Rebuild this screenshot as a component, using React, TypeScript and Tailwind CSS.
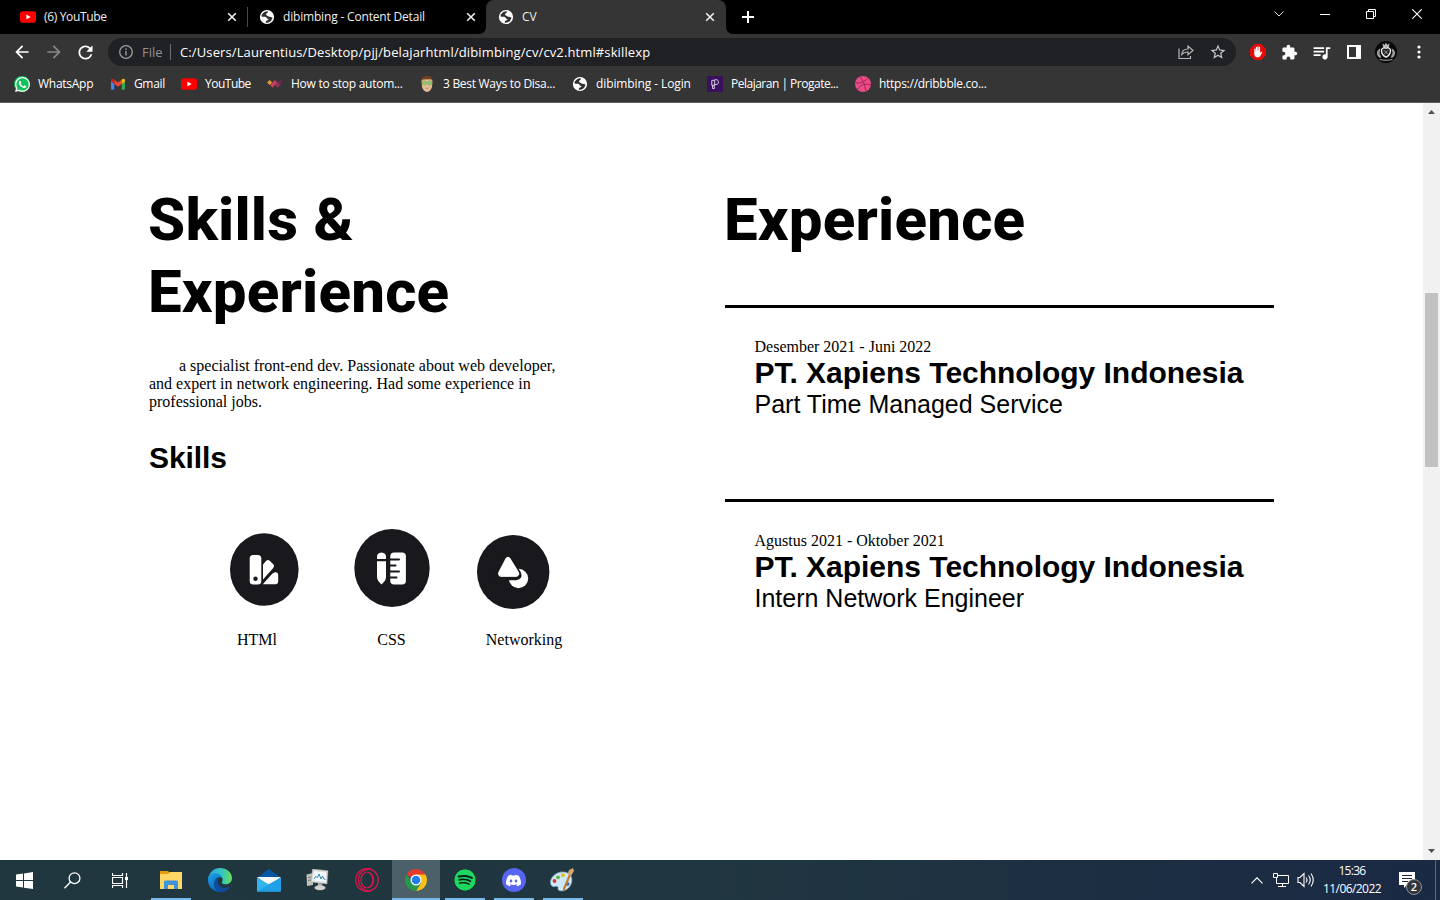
import React from "react";
import { SiDiscord } from "react-icons/si";
import { MdExtension, MdQueueMusic, MdRefresh, MdArrowBack, MdArrowForward, MdStarOutline } from "react-icons/md";
import { FaSpotify, FaWhatsapp } from "react-icons/fa";

const UI = "font-['Open_Sans','Noto_Sans',sans-serif]";

function YouTube() {
  return (
    <svg width="16" height="16" viewBox="0 0 16 16" className="block">
      <rect x="0" y="2.3" width="16" height="11.4" rx="2.8" fill="#f00" />
      <path d="M6.4 5.6 10.6 8l-4.2 2.4z" fill="#fff" />
    </svg>
  );
}

function Globe() {
  return (
    <svg width="16" height="16" viewBox="0 0 16 16" className="block">
      <circle cx="8" cy="8" r="7.1" fill="#fff" />
      <path d="M8.800 2.300C6.500 2.200 4.200 3.400 2.900 5.600c-.3.800-.4 1.400-.4 2 1.300.2 3-.2 4.300.3 1.200.4.700 1.600 1.700 1.800.9.200 1.300.6.700 1.400-.6.700-1.900.4-2.300 1.300-.2.500-.1.900-.1 1.300 2.500.2 4.600-.8 5.800-2.800.5-.9.800-1.800.8-2.700-1.200.5-1.800-.6-2.600-.5-1 .1-1.500 0-1.900-.7-.3-.6-1.600-.4-1.800-1.300-.2-.8.400-1.400 1.200-1.700.6-.2.500-1 .5-1.700z" fill="#303030" />
    </svg>
  );
}

function Gmail() {
  return (
    <svg width="16" height="16" viewBox="0 0 16 16" className="block">
      <path d="M1 4.500 4.300 7v6.800H2a1 1 0 0 1-1-1z" fill="#4285f4" />
      <path d="M11.700 7 15 4.500v8.300a1 1 0 0 1-1 1h-2.300z" fill="#34a853" />
      <path d="m4.300 3.700 3.700 2.800 3.700-2.800V8L8 10.800 4.300 8z" fill="#ea4335" />
      <path d="M1 4.500c0-1.900 1.800-2.200 3.300-.8V8L1 5.600z" fill="#c5221f" />
      <path d="M15 4.500c0-1.900-1.800-2.200-3.300-.8V8L15 5.600z" fill="#fbbc04" />
    </svg>
  );
}

function WhatsApp() {
  return (
    <span className="flex size-4 items-center justify-center rounded-full bg-[#12c25b] text-white">
      <FaWhatsapp size={17} className="shrink-0" />
    </span>
  );
}

function Diamonds() {
  return (
    <svg width="16" height="16" viewBox="0 0 16 16" className="block">
      <path d="m2.700 4 2.600 2.500-2.600 2.600L.1 6.500z" fill="#d99a29" />
      <path d="m5.500 6.500 2.600 2.600-2.600 2.700L3 9.100zM8 4l2.500 2.500L8 9.100 5.400 6.500z" fill="#c43f58" />
      <path d="m10.700 6.500 2.500 2.600-2.500 2.700L8 9.100z" fill="#96306b" />
      <path d="m10.600 6.400 2.600-2.500 2.500.6-2.600 2.300 2.100.4-2 2z" fill="#6a2855" />
    </svg>
  );
}

function Face() {
  return (
    <svg width="16" height="16" viewBox="0 0 16 16" className="block">
      <path d="M2.500 5c0-2.500 2-4 5.500-4s5.500 1.500 5.500 4.500L13 11q-1.500 4.500-5 5-3.500-.5-5-5z" fill="#e4bd95" />
      <path d="M2.800 5C2 1.500 4.500 0 8 0s6 1.500 5.200 5L12 3.300 4 3.600z" fill="#70401f" />
      <circle cx="5.400" cy="7" r="2.100" fill="#95c96f" stroke="#6da252" strokeWidth=".6" />
      <circle cx="10.600" cy="7" r="2.100" fill="#95c96f" stroke="#6da252" strokeWidth=".6" />
      <path d="M6.500 12.300h3" stroke="#b98063" strokeWidth=".8" />
    </svg>
  );
}

function Progate() {
  return (
    <svg width="16" height="16" viewBox="0 0 16 16" className="block">
      <rect width="16" height="16" rx="1" fill="#38105d" />
      <path d="M4.800 4.300h2.900v5H4.800zM5.600 9.300v3.200h1.700V9.500M7.700 3.700h1.600c2.900 0 2.900 4.800-.1 4.800H7.700" fill="none" stroke="#ddcfea" strokeWidth="1" />
    </svg>
  );
}

function Dribbble() {
  return (
    <svg width="16" height="16" viewBox="0 0 16 16" className="block">
      <circle cx="8" cy="8" r="8" fill="#ea4c89" />
      <path d="M5 .8c3 3.300 4.800 8 5.800 14M.5 7c5 .2 9-1 12.200-4.500M2.500 13.400C5.500 8.500 10.500 7 15.800 9" fill="none" stroke="#a42458" strokeWidth="1" />
    </svg>
  );
}

function Close() {
  return (
    <svg width="10" height="10" viewBox="0 0 10 10" className="block">
      <path d="m1.200 1.200 7.600 7.600m0-7.600L1.200 8.800" stroke="#f1f1f1" strokeWidth="1.600" />
    </svg>
  );
}

function Tabs() {
  return (
    <div className="flex h-[34px] shrink-0 bg-black text-[12px] text-[#eeeeee]">
      <div className="flex w-[247px] items-center pl-5">
        <YouTube />
        <span className="ml-2 w-[183px] tracking-[-0.34px]">(6) YouTube</span>
        <Close />
      </div>
      <div className="flex w-[239px] items-center">
        <span className="h-5 w-px bg-[#4a4a4a]" />
        <span className="ml-[11px]"><Globe /></span>
        <span className="ml-2 w-[183px] whitespace-nowrap tracking-[-0.18px]">dibimbing - Content Detail</span>
        <Close />
      </div>
      <div className="relative flex w-60 items-center rounded-t-lg bg-[#353535] pl-3">
        <svg width="8" height="8" className="absolute bottom-0 -left-2"><path d="M8 0v8H0q8 0 8-8" fill="#353535" /></svg>
        <svg width="8" height="8" className="absolute -right-2 bottom-0"><path d="M0 0v8h8Q0 8 0 0" fill="#353535" /></svg>
        <Globe />
        <span className="ml-2 w-[183px] tracking-[-0.1px]">CV</span>
        <Close />
      </div>
      <svg width="12" height="12" viewBox="0 0 12 12" className="mt-[11px] ml-4"><path d="M6 0v12M0 6h12" stroke="#fff" strokeWidth="2" /></svg>
      <div className="ml-auto flex h-7 items-center text-white">
        <svg width="10" height="6" viewBox="0 0 10 6" className="mr-9"><path d="m.5.5 4.500 4.500L9.500.5" fill="none" stroke="#ddd" /></svg>
        <svg width="10" height="10" className="mr-9"><path d="M0 5.500h10" stroke="#fff" /></svg>
        <svg width="10" height="10" className="mr-9"><path d="M.5 2.500h7v7h-7zM2.500 2.500v-2h7v7h-2" fill="none" stroke="#fff" /></svg>
        <svg width="10" height="10" className="mr-[18px]"><path d="m.3.3 9.400 9.400m0-9.400L.3 9.700" stroke="#fff" strokeWidth="1.100" /></svg>
      </div>
    </div>
  );
}

function Crest() {
  return (
    <svg width="22" height="22" viewBox="0 0 22 22" className="block">
      <circle cx="11" cy="11" r="11" fill="#080808" />
      <path d="m7.500 2.300 2 1.700L11 1.700 12.500 4l2-1.700-.7 4H8.200z" fill="#bbb" />
      <path d="M5.500 7.500c-4 1-5 6-1.500 9l2.500.2L4.500 12zm11 0c4 1 5 6 1.500 9l-2.500.2 2-4.700z" fill="#999" />
      <path d="M11 7.300c-2.200-1.400-5 .2-4.500 3 .3 2.500 2.200 4.700 4.500 6 2.300-1.300 4.200-3.500 4.500-6 .5-2.800-2.300-4.400-4.500-3z" fill="#222" stroke="#f0f0f0" strokeWidth="1.300" />
      <path d="m9 9.300 4 4m0-4-4 4" stroke="#999" />
      <path d="M4.500 18.500c4 1 9 1 13 0" fill="none" stroke="#bbb" strokeWidth=".9" />
    </svg>
  );
}

function Toolbar() {
  return (
    <div className="flex h-9 shrink-0 items-center bg-[#353535] text-white">
      <MdArrowBack size={20} className="ml-3" />
      <MdArrowForward size={20} className="ml-3 text-[#888]" />
      <MdRefresh size={21} className="ml-[11px]" />
      <div className="ml-3 flex h-7 w-[1128px] items-center rounded-full bg-[#202124]">
        <svg width="14" height="14" viewBox="0 0 14 14" className="ml-[11px]"><circle cx="7" cy="7" r="6.300" fill="none" stroke="#9aa0a6" strokeWidth="1.300" /><path d="M7 6v4.500M7 3.500V5" stroke="#9aa0a6" strokeWidth="1.400" /></svg>
        <span className="ml-[9px] w-[28px] pt-px text-[13px] text-[#8f9397]">File</span>
        <span className="h-4 w-px bg-[#6b6e72]" />
        <span className="ml-[9px] whitespace-nowrap pt-px text-[13px] tracking-[0.12px]">C:/Users/Laurentius/Desktop/pjj/belajarhtml/dibimbing/cv/cv2.html#skillexp</span>
        <svg width="16" height="16" viewBox="0 0 16 16" className="mr-[15px] ml-auto"><path d="M1 4.500v10h11.500V12M3.800 10.500C4 7 6 5 10 5V2l5 4.500-5 4.200V8C7 8 5.300 8.600 3.800 10.500z" fill="none" stroke="#b4b6b8" strokeWidth="1.200" /></svg>
        <MdStarOutline size={18} className="mr-[9px] text-[#c5c7ca]" />
      </div>
      <svg width="16" height="16" viewBox="0 0 16 16" className="ml-[14px]">
        <path d="M4.700 0h6.600L16 4.700v6.600L11.300 16H4.700L0 11.300V4.700z" fill="#e30b0b" />
        <path d="M4.300 8V5.200c0-.9 1.200-.9 1.200 0V7h.3V3.500c0-1 1.200-1 1.200 0v3h.3V2.900c0-1 1.300-1 1.300 0v3.600h.3v-3c0-1 1.200-1 1.200 0V9l1-.9c.5-.6 1.400-.1 1 .6l-2 3.500C9 14 4.300 14 4.300 10z" fill="#fff" />
      </svg>
      <MdExtension size={17} className="ml-[15px]" />
      <MdQueueMusic size={21} className="ml-[13px]" />
      <svg width="14" height="14" className="ml-[15px]"><path d="M1 1h12v12H1z" fill="none" stroke="#fff" strokeWidth="2" /><path d="M9 1h4v12H9z" fill="#fff" /></svg>
      <span className="ml-[14px]"><Crest /></span>
      <svg width="4" height="14" className="ml-5"><g fill="#fff"><circle cx="2" cy="2" r="1.600" /><circle cx="2" cy="7" r="1.600" /><circle cx="2" cy="12" r="1.600" /></g></svg>
    </div>
  );
}

const bookmarks = [
  { icon: <WhatsApp />, label: "WhatsApp", box: "w-[96px]", track: "tracking-[-0.27px]" },
  { icon: <Gmail />, label: "Gmail", box: "w-[71px]", track: "tracking-[-0.35px]" },
  { icon: <YouTube />, label: "YouTube", box: "w-[86px]", track: "tracking-[-0.5px]" },
  { icon: <Diamonds />, label: "How to stop autom...", box: "w-[152px]", track: "tracking-[-0.26px]" },
  { icon: <Face />, label: "3 Best Ways to Disa...", box: "w-[153px]", track: "tracking-[-0.29px]" },
  { icon: <Globe />, label: "dibimbing - Login", box: "w-[135px]", track: "tracking-[-0.1px]" },
  { icon: <Progate />, label: "Pelajaran | Progate...", box: "w-[148px]", track: "tracking-[-0.5px]" },
  { icon: <Dribbble />, label: "https://dribbble.co...", box: "w-[150px]", track: "tracking-[-0.27px]" },
];

function Bookmarks() {
  return (
    <div className="flex h-[33px] shrink-0 items-start border-b border-[#5c5c5c] bg-[#353535] pt-[5px] pl-[14px] text-[12px] text-white">
      {bookmarks.map((b) => (
        <div key={b.label} className={`flex h-[18px] shrink-0 items-center gap-2 ${b.box}`}>
          {b.icon}
          <span className={`whitespace-nowrap ${b.track}`}>{b.label}</span>
        </div>
      ))}
    </div>
  );
}

function Job({ date, role }: { date: string; role: string }) {
  return (
    <div className="h-[194px] border-t-[3px] border-black pt-[30px] pl-[29.500px]">
      <p className="h-[18px] font-['Liberation_Serif',serif] text-[16px] leading-[18px]">{date}</p>
      <h3 className="h-[34px] whitespace-nowrap font-['Liberation_Sans',sans-serif] text-[30px] leading-[34px] font-bold tracking-[-0.02px]">PT. Xapiens Technology Indonesia</h3>
      <p className="font-['Liberation_Sans',sans-serif] text-[25px] leading-[29px]">{role}</p>
    </div>
  );
}

function Page() {
  return (
    <main className="flex min-w-0 flex-1 bg-white text-black">
      <section className="ml-[149px] w-[576px]">
        <h1 className="mt-[81px] -ml-px w-[350px] font-['Roboto',sans-serif] text-[60px] leading-[72px] font-extrabold tracking-[0.2px]">Skills &amp; Experience</h1>
        <p className="mt-[29px] w-[420px] indent-[30px] font-['Liberation_Serif',serif] text-[16px] leading-[18px]">
          a specialist front-end dev. Passionate about web developer,<br />and expert in network engineering. Had some experience in<br />professional jobs.
        </p>
        <h2 className="mt-[30px] font-['Liberation_Sans',sans-serif] text-[30px] leading-[34px] font-bold tracking-[-0.1px]">Skills</h2>
        <div className="mt-[54px] ml-[81px] flex h-20">
          <svg width="69" height="73" viewBox="0 0 69 73" className="mt-1">
            <ellipse cx="34.300" cy="36.500" rx="34.300" ry="36.300" fill="#19181d" />
            <g fill="#fff"><rect x="19.700" y="22" width="11.600" height="29.500" rx="3.500" /><path d="M33 31.500 36 28q2-2 4 .1l3 3q2 2 0 4.200L33 46.500zM32.800 51.300 42 41q2-2 4-1.700 2.200.3 2.200 2.700v6q0 3.300-3 3.300z" /></g>
            <circle cx="25.500" cy="45.700" r="2.200" fill="#19181d" />
          </svg>
          <svg width="76" height="79" viewBox="0 0 76 79" className="ml-[55px]">
            <ellipse cx="38" cy="39" rx="37.700" ry="39" fill="#19181d" />
            <path d="M23 30v-2.500q0-3.500 4.500-4 4.500.5 4.500 4V30zm0 2.200h9V48q0 3.500-4.500 7.500Q23 51.500 23 48z" fill="#fff" />
            <rect x="36.300" y="23.500" width="15.600" height="32" rx="3.800" fill="#fff" />
            <path d="M36 30.500h9M36 36.500h5.500M36 42.500h9M36 48.500h6.500" stroke="#19181d" strokeWidth="2" strokeLinecap="round" />
          </svg>
          <svg width="73" height="75" viewBox="0 0 73 75" className="mt-[6px] ml-[47px]">
            <ellipse cx="36.200" cy="37" rx="36.200" ry="37" fill="#19181d" />
            <circle cx="41.500" cy="43.500" r="9.700" fill="#fff" />
            <path d="M28.500 23.500q2.300-3.500 5 0l8.500 14q2.500 5.500-3 6H24q-5.500-.5-3-6z" fill="#fff" stroke="#19181d" strokeWidth="3.500" />
            <path d="M28.500 23.500q2.300-3.500 5 0l8 13q2.300 4.300-2 5H24q-4.300-.7-2.300-5z" fill="#fff" />
          </svg>
        </div>
        <div className="mt-[22px] flex font-['Liberation_Serif',serif] text-[16px] leading-[18px]">
          <span className="ml-[88px] w-[140.300px]">HTMl</span><span className="w-[108.500px]">CSS</span><span>Networking</span>
        </div>
      </section>
      <section className="w-[549px]">
        <h1 className="mt-[81px] mb-[49px] -ml-px font-['Roboto',sans-serif] text-[60px] leading-[72px] font-extrabold tracking-[0.2px]">Experience</h1>
        <Job date="Desember 2021 - Juni 2022" role="Part Time Managed Service" />
        <Job date="Agustus 2021 - Oktober 2021" role="Intern Network Engineer" />
      </section>
    </main>
  );
}

function Scrollbar() {
  return (
    <div className="flex w-[17px] shrink-0 flex-col items-center justify-between bg-[#f1f1f1]">
      <svg width="17" height="17"><path d="m5 11 3.500-4 3.500 4z" fill="#505050" /></svg>
      <div className="mt-[173px] mb-auto h-[174px] w-[13px] bg-[#c1c1c1]" />
      <svg width="17" height="17"><path d="m5 6 3.500 4L12 6z" fill="#505050" /></svg>
    </div>
  );
}

function Windows() {
  return <svg width="17" height="17" viewBox="0 0 17 17"><path d="m0 2.500 7-.9V8H0zM8 1.400 17 0v8H8zM0 9h7v6.500l-7-1zM8 9h9v8l-9-1.300z" fill="#fff" /></svg>;
}
function Search() {
  return <svg width="17" height="17" viewBox="0 0 17 17"><circle cx="10.500" cy="6.200" r="5.400" fill="none" stroke="#fff" strokeWidth="1.300" /><path d="m6.500 10-6 6.300" stroke="#fff" strokeWidth="1.300" /></svg>;
}
function TaskView() {
  return <svg width="17" height="17" viewBox="0 0 17 17"><path d="M.5 1v2.500h10V1M.5 16v-2.500h10V16M.5 5.500h10v6H.5zM14.500 1v15" fill="none" stroke="#fff" strokeWidth="1.200" /><path d="M13 5h3v3h-3z" fill="#fff" /></svg>;
}
function Folder() {
  return <svg width="22" height="19" viewBox="0 0 22 19"><path d="M0 0h8l2 2v5H0z" fill="#e69b0b" /><path d="M0 3h8l2-2h12v17H0z" fill="#ffd766" /><path d="M4 18v-7q0-1.500 1.500-1.500h11q1.500 0 1.500 1.500v7h-4v-4H8v4z" fill="#3d92d8" /></svg>;
}
function Edge() {
  return (
    <svg width="24" height="24" viewBox="0 0 24 24">
      <defs>
        <linearGradient id="edgeTop" x1="0" x2="1"><stop stopColor="#2aa7e4" /><stop offset=".6" stopColor="#36c6bd" /><stop offset="1" stopColor="#6adf52" /></linearGradient>
        <linearGradient id="edgeBody" x1="0" x2=".6" y2="1"><stop stopColor="#1ca0e8" /><stop offset="1" stopColor="#0761b8" /></linearGradient>
      </defs>
      <path d="M0 11.500C.7 4.800 5.700 0 12 0c6.800 0 12 4.600 12 10 0 4-3 6.300-6.500 6.300-2.800 0-4-1-3.500-2.300 1-2 1-4-1-5.500C8.800 5 2 7 0 11.500z" fill="url(#edgeTop)" />
      <path d="M0 12c0-5 4-6.700 7-6.700 3.700 0 6.700 2 7 4.700-3-2-6.500 0-6.500 4 0 5 5.500 8 12 6C17 23 14.800 24 12 24 5.300 24 0 18.700 0 12z" fill="url(#edgeBody)" />
      <path d="M9.500 9.500C3 13 6 23.500 13 24c4 .1 7.500-2.300 9.300-5.500C15 22 8 18 9.500 9.500z" fill="#104d9b" />
    </svg>
  );
}
function Mail() {
  return <svg width="24" height="23" viewBox="0 0 24 23"><path d="M0 9 12 0l12 9v4H0z" fill="#0757a9" /><path d="M0 8h24l-12 9z" fill="#f7f7f7" /><path d="M0 8.500 24 22.500H0z" fill="#31b5ef" /><path d="M24 8.500v14H0l13-8z" fill="#20a0e6" /></svg>;
}
function Monitor() {
  return (
    <svg width="23" height="22" viewBox="0 0 23 22">
      <path d="M.5 5.500 7 4v12l-6 1z" fill="#bfc1ba" />
      <path d="m6.500 0 15.500 1.800L21 15 5 13z" fill="#dededa" stroke="#a7a7a3" strokeWidth=".5" />
      <path d="m8 2.200 12.300 1.300-.8 9.500L6.700 11.500z" fill="#f3faff" />
      <path d="m8 10 1.500-2.500 2 1L13 5l2 5 1.500-3 1.500 3 1.500.5" fill="none" stroke="#3886b7" />
      <path d="m12 14 4 .5.500 4h-5z" fill="#a9aba7" />
      <ellipse cx="14" cy="18.800" rx="5.500" ry="2.500" fill="#d2d3cf" />
      <path d="M2 8.500 5 8M2 11.500l3-.5" stroke="#707b77" />
    </svg>
  );
}
function Opera() {
  return <svg width="24" height="24" viewBox="0 0 24 24"><g fill="none" stroke="#e3164b" strokeWidth="1.200"><circle cx="12" cy="12" r="11.300" /><ellipse cx="12" cy="12" rx="6" ry="8" /><path d="M15.500 1.300C9 .5 3.500 5.500 3.500 12S9 23.500 15.500 22.700M13.500 4.300c3 1 5 4 5 7.700s-2 6.700-5 7.700" /></g></svg>;
}
function Chrome() {
  return <svg width="22" height="22" viewBox="0 0 22 22"><path d="M11 11 1.500 5.500a11 11 0 0 1 19 0z" fill="#e33b2e" /><path d="M11 5.500h9.500A11 11 0 0 1 11 22l5-8z" fill="#fbc116" /><path d="M1.500 5.500A11 11 0 0 0 11 22l4.800-8.300L11 12l-4.700 1.600z" fill="#279847" /><circle cx="11" cy="11" r="5.500" fill="#fff" /><circle cx="11" cy="11" r="4.300" fill="#247ee9" /></svg>;
}
function Discord() {
  return <span className="flex size-6 items-center justify-center rounded-full bg-[#5865f2] text-white"><SiDiscord size={15} /></span>;
}
function Paint() {
  return (
    <svg width="25" height="24" viewBox="0 0 25 24">
      <path d="M14 4C7 3 0 9 .5 15c.3 3 2.500 4.200 5 3.500 2-.5 3 .5 2.500 2-.4 2 2.500 3 6 2 6-1.500 9-8 7.500-13C20.500 6 18 4.500 14 4z" fill="#cde8f6" stroke="#7ca9c5" strokeWidth=".7" />
      <circle cx="4.500" cy="13" r="1.900" fill="#d93a2f" /><circle cx="8" cy="9.300" r="1.900" fill="#5cb341" /><circle cx="13" cy="7.300" r="2" fill="#e1be27" /><circle cx="17.500" cy="16" r="2" fill="#3c74c1" />
      <path d="m19 6 2 1-6.500 15.500-1.500 1v-3z" fill="#c67a2b" /><path d="m18 5 1-3 4-2 1 3-3 5z" fill="#d8a46c" />
    </svg>
  );
}

const apps = [
  { icon: <Windows />, box: "w-12", line: "" },
  { icon: <Search />, box: "w-12", line: "" },
  { icon: <TaskView />, box: "w-12", line: "" },
  { icon: <Folder />, box: "ml-0.5 w-[49px]", line: "h-0.5 w-10 bg-[#76b9ed]" },
  { icon: <Edge />, box: "w-[49px]", line: "" },
  { icon: <Mail />, box: "w-[49px]", line: "" },
  { icon: <Monitor />, box: "w-[49px]", line: "" },
  { icon: <Opera />, box: "w-[50px]", line: "" },
  { icon: <Chrome />, box: "w-12 bg-[#4c6069]", line: "h-0.5 w-12 bg-[#76b9ed]" },
  { icon: <FaSpotify size={22} color="#1ed760" className="rounded-full bg-[#102019]" />, box: "w-[49px]", line: "h-0.5 w-10 bg-[#76b9ed]" },
  { icon: <Discord />, box: "w-[49px]", line: "h-0.5 w-10 bg-[#76b9ed]" },
  { icon: <Paint />, box: "w-[49px]", line: "h-0.5 w-10 bg-[#76b9ed]" },
];

function Taskbar() {
  return (
    <footer className="flex h-10 shrink-0 bg-linear-to-r from-[#21373f] via-[#203640] to-[#1a2944] text-white">
      {apps.map((a, i) => (
        <div key={i} className={`flex h-10 shrink-0 flex-col items-center ${a.box}`}>
          <div className="flex h-[38px] items-center justify-center pt-0.5">{a.icon}</div>
          <span className={a.line} />
        </div>
      ))}
      <div className="ml-auto flex items-center">
        <svg width="12" height="7" className="mr-[10px]"><path d="m.5 6.300 5.500-5.500 5.500 5.500" fill="none" stroke="#fff" strokeWidth="1.200" /></svg>
        <svg width="17" height="15" className="mr-[7px]"><path d="M5 2.500h10.500v8H3.500V5M9.500 10.500v3M5 13.500h8M.5.500h4v4h-4z" fill="none" stroke="#fff" /></svg>
        <svg width="17" height="16" className="mr-[9px]"><path d="M1 5.500h2l4-4v13l-4-4H1zM9 5.500q2 2.500 0 5M11.500 3.500q3.500 4.500 0 9M14 1.500q4.500 6.500 0 13" fill="none" stroke="#fff" strokeWidth="1.100" /></svg>
        <div className="w-[58px] whitespace-nowrap text-center text-[12px] leading-[18px]">
          <div className="tracking-[-0.7px]">15:36</div><div className="tracking-[-0.58px]">11/06/2022</div>
        </div>
        <div className="relative ml-[18px] h-6 w-[26px]">
          <svg width="17" height="17" className="relative top-1"><path d="M0 0h16v13H8l-3 3v-3H0z" fill="#fff" /><path d="M3 3.500h10M3 6.500h10M3 9.500h6" stroke="#1a2944" /></svg>
          <span className="absolute top-[11px] left-[7px] flex size-4 items-center justify-center rounded-full border border-[#8e9296] bg-[#31363c] text-[11px] font-semibold">2</span>
        </div>
        <span className="ml-[10px] h-10 w-px bg-[#5e6877]" />
        <span className="w-1" />
      </div>
    </footer>
  );
}

export default function App() {
  return (
    <div className={`flex h-[900px] w-[1440px] flex-col overflow-hidden bg-white ${UI}`}>
      <Tabs />
      <Toolbar />
      <Bookmarks />
      <div className="flex min-h-0 flex-1">
        <Page />
        <Scrollbar />
      </div>
      <Taskbar />
    </div>
  );
}
